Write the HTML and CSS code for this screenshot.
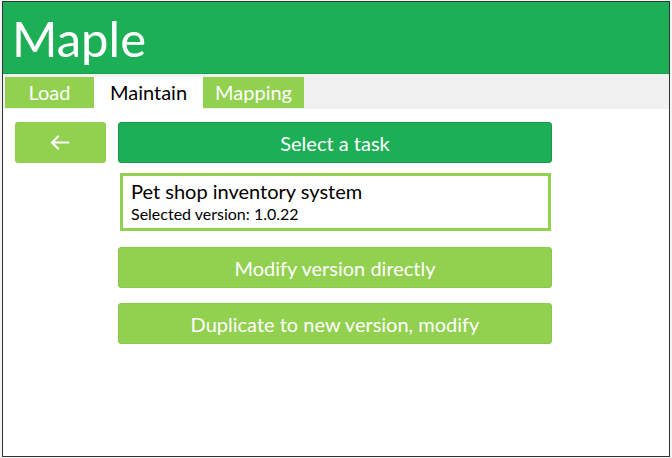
FILE: index.html
```html
<!DOCTYPE html>
<html>
<head>
<meta charset="utf-8">
<link rel="stylesheet" href="styles.css">
</head>
<body>
<div class="frame">
  <header class="header"><h1 class="title">Maple</h1></header>
  <nav class="tabs">
    <div class="tab tab-green">Load</div>
    <div class="tab tab-active">Maintain</div>
    <div class="tab tab-green tab-map">Mapping</div>
  </nav>
  <main class="content">
    <div class="row">
      <button class="btn btn-back" aria-label="Back">
        <svg width="20" height="15" viewBox="0 0 20 15"><path d="M18.5 7.5H2M8 1.5L2 7.5l6 6" fill="none" stroke="#fff" stroke-width="2.2" stroke-linecap="round" stroke-linejoin="round"/></svg>
      </button>
      <div class="col">
        <button class="btn btn-dark">Select a task</button>
        <div class="info">
          <div class="info-title">Pet shop inventory system</div>
          <div class="info-sub">Selected version: 1.0.22</div>
        </div>
        <button class="btn btn-light btn-first">Modify version directly</button>
        <button class="btn btn-light btn-second">Duplicate to new version, modify</button>
      </div>
    </div>
  </main>
</div>
</body>
</html>
```
FILE: styles.css
```css
* { box-sizing: border-box; }
html, body { margin: 0; padding: 0; background: #f4f4f4; }
body { font-family: "Lato", "Open Sans", sans-serif; }
.frame {
  margin: 1px 0 0 2px;
  width: 668px;
  height: 456px;
  border: 1px solid #333;
  background: #fff;
  display: flex;
  flex-direction: column;
}
.header {
  background: #1daf56;
  height: 72px;
  border-bottom: 1px solid #17a04c;
  padding: 0 0 0 9px;
}
.title {
  margin: 0;
  color: #fff;
  font-weight: 400;
  font-size: 49px;
  line-height: 72px;
  letter-spacing: 0;
}
.tabs {
  background: #f0f0f0;
  height: 35px;
  display: flex;
  padding: 3px 0 1px 2px;
}
.tab {
  font-size: 20px;
  line-height: 31px;
  text-align: center;
}
.tab-green { background: #92d050; color: #fff; width: 89px; }
.tab-map { width: 101px; }
.tab-active { background: #fff; color: #000; width: 109px; height: 32px; }
.content { padding: 13px 0 0 12px; }
.row { display: flex; gap: 12px; align-items: flex-start; }
.btn {
  border: none;
  border-radius: 3px;
  font-family: inherit;
  color: #fff;
  font-size: 20px;
  height: 41px;
  padding: 0;
  display: flex;
  align-items: center;
  justify-content: center;
}
.btn-back { width: 91px; background: #92d050; padding-right: 2px; }
.col { display: flex; flex-direction: column; width: 434px; }
.btn-dark { background: #1daf56; border: 1px solid #169a48; width: 434px; }
.btn-light { background: #92d050; border: 1px solid #8ac64a; width: 434px; }
.info {
  margin: 10px 1px 0 2px;
  height: 58px;
  border: 3px solid #92d050;
  padding: 3px 8px;
  color: #000;
}
.info-title { font-size: 20px; line-height: 25px; }
.info-sub { font-size: 16px; line-height: 19px; }
.btn-first { margin-top: 16px; }
.btn-second { margin-top: 15px; }
```
